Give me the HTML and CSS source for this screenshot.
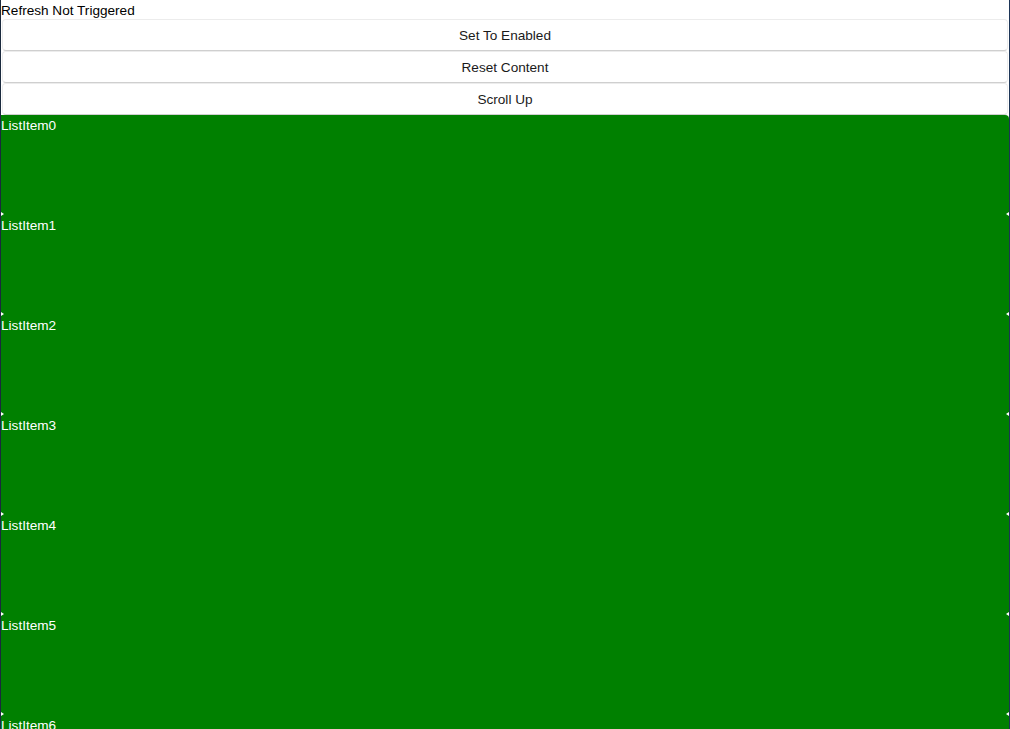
FILE: index.html
```html
<!DOCTYPE html>
<html>
<head>
<meta charset="utf-8">
<link rel="stylesheet" href="styles.css">
</head>
<body>
<div class="page">
  <div class="status">Refresh Not Triggered</div>
  <button class="btn">Set To Enabled</button>
  <button class="btn">Reset Content</button>
  <button class="btn">Scroll Up</button>
  <div class="list">
    <div class="item"><span class="label">ListItem0</span></div>
    <div class="item"><span class="mark-l"></span><span class="mark-r"></span><span class="label">ListItem1</span></div>
    <div class="item"><span class="mark-l"></span><span class="mark-r"></span><span class="label">ListItem2</span></div>
    <div class="item"><span class="mark-l"></span><span class="mark-r"></span><span class="label">ListItem3</span></div>
    <div class="item"><span class="mark-l"></span><span class="mark-r"></span><span class="label">ListItem4</span></div>
    <div class="item"><span class="mark-l"></span><span class="mark-r"></span><span class="label">ListItem5</span></div>
    <div class="item"><span class="mark-l"></span><span class="mark-r"></span><span class="label">ListItem6</span></div>
  </div>
</div>
</body>
</html>
```
FILE: styles.css
```css
html, body {
  margin: 0;
  padding: 0;
  height: 100%;
  overflow: hidden;
  background: #ffffff;
}
.page {
  width: 1010px;
  height: 729px;
  box-sizing: border-box;
  border-left: 1px solid #1b2a3e;
  border-right: 1px solid #1d3557;
  display: flex;
  flex-direction: column;
  overflow: hidden;
  font-family: "Liberation Sans", Arial, sans-serif;
  font-size: 13.6px;
}
.status {
  height: 19px;
  line-height: 19px;
  padding-top: 1px;
  box-sizing: border-box;
  color: #000000;
  flex: none;
}
.btn {
  flex: none;
  height: 32px;
  margin: 0 1px 0 1px;
  box-sizing: border-box;
  background: #ffffff;
  border: 1px solid #ececec;
  border-bottom: 1px solid #cfcfcf;
  border-radius: 4px;
  font-family: "Liberation Sans", Arial, sans-serif;
  font-size: 13.6px;
  color: #1a1a1a;
  padding: 0;
}
.list {
  flex: none;
  display: flex;
  flex-direction: column;
  background: #008000;
  border-top-right-radius: 4px;
}
.item {
  position: relative;
  height: 100px;
  flex: none;
  color: #ffffff;
}
.label {
  display: block;
  line-height: 19px;
  padding-top: 1px;
}
.mark-l, .mark-r {
  position: absolute;
  top: -3px;
  width: 0;
  height: 0;
  border-top: 2px solid transparent;
  border-bottom: 2px solid transparent;
}
.mark-l {
  left: 0;
  border-left: 3px solid #ffffff;
}
.mark-r {
  right: 0;
  border-right: 3px solid #ffffff;
}
```
